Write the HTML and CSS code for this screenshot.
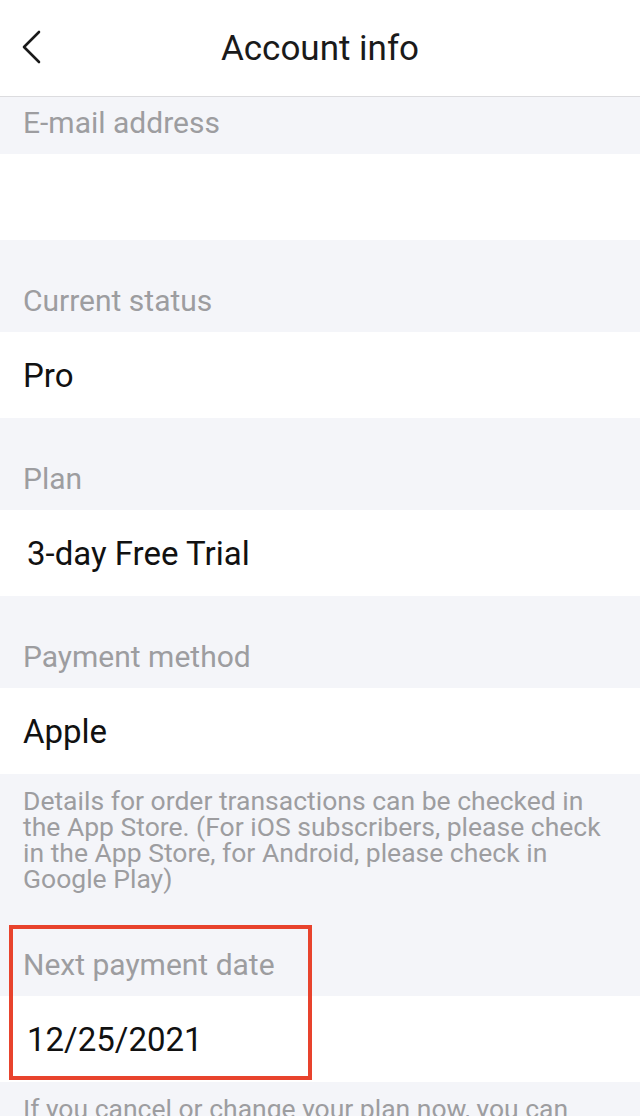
FILE: index.html
```html
<!DOCTYPE html>
<html lang="en">
	<head>
		<meta http-equiv="Content-Type" content="text/html; charset=utf-8" />
		<title>Account info</title>
		<link rel="stylesheet" href="styles.css">
	</head>
	<body>
		<div class="header">
			<svg class="back" width="24" height="34" viewBox="0 0 24 34">
				<polyline points="19,2 4,17 19,32" fill="none" stroke="#1a1a1a" stroke-width="2.6" stroke-linecap="round" stroke-linejoin="round" />
			</svg>
			<h1 class="title">Account info</h1>
		</div>

		<div class="label first">E-mail address</div>
		<div class="value"></div>

		<div class="label">Current status</div>
		<div class="value">Pro</div>

		<div class="label">Plan</div>
		<div class="value shift">3-day Free Trial</div>

		<div class="label">Payment method</div>
		<div class="value">Apple</div>

		<p class="note">Details for order transactions can be checked in the App Store. (For iOS subscribers, please check in the App Store, for Android, please check in Google Play)</p>

		<div class="marked">
			<div class="label">Next payment date</div>
			<div class="value shift">12/25/2021</div>
			<div class="mark"></div>
		</div>

		<p class="note">If you cancel or change your plan now, you can continue to use the current plan until the next payment date.</p>
	</body>
</html>
```

FILE: styles.css
```css
*{
	padding: 0;
	margin: 0;
	box-sizing: border-box;
}
body{
	background: #f4f5f9;
	font-family: Roboto, "Noto Sans", sans-serif;
	width: 640px;
	overflow: hidden;
}
.header{
	height: 97px;
	background: #fff;
	border-bottom: 1px solid #dcdcdf;
	display: flex;
	align-items: center;
	justify-content: center;
	position: relative;
}
.back{
	position: absolute;
	left: 20px;
	top: 30px;
}
.title{
	font-size: 35px;
	font-weight: 400;
	color: #1a1a1a;
}
.label{
	padding: 46px 23px 16px;
	font-size: 30px;
	line-height: 30px;
	color: #9d9da0;
}
.label.first{
	padding-top: 11px;
}
.value{
	height: 86px;
	background: #fff;
	display: flex;
	align-items: center;
	padding-left: 23px;
	font-size: 33px;
	color: #111;
}
.value.shift{
	padding-left: 27px;
}
.note{
	padding: 14px 22px 13px 23px;
	font-size: 26.5px;
	line-height: 26px;
	color: #9d9da0;
}
.marked{
	position: relative;
}
.marked .label{
	padding-top: 45px;
}
.mark{
	position: absolute;
	left: 9px;
	top: 20px;
	width: 303px;
	height: 155px;
	border: 4px solid #e8432d;
}
```
